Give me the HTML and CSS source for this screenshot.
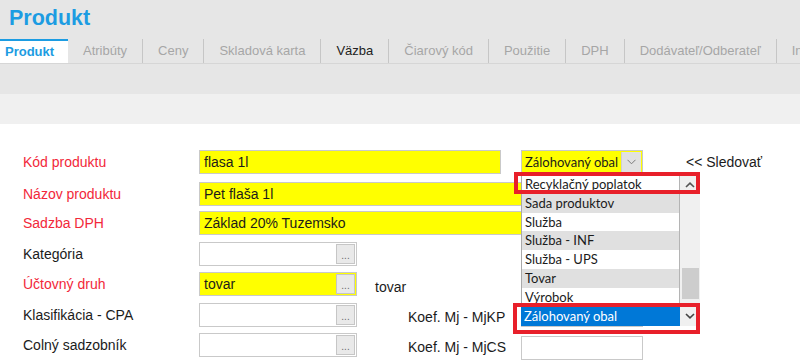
FILE: index.html
```html
<!DOCTYPE html>
<html lang="sk">
<head>
  <meta charset="UTF-8">
  <title>Produkt</title>
  <link rel="stylesheet" href="styles.css">
</head>
<body>
  <header class="topbar">
    <h1 class="title">Produkt</h1>
    <nav class="tabs">
      <span class="tab active">Produkt</span>
      <span class="tab">Atribúty</span>
      <span class="tab">Ceny</span>
      <span class="tab">Skladová karta</span>
      <span class="tab enabled">Väzba</span>
      <span class="tab">Čiarový kód</span>
      <span class="tab">Použitie</span>
      <span class="tab">DPH</span>
      <span class="tab">Dodávateľ/Odberateľ</span>
      <span class="tab">Inventúra</span>
    </nav>
  </header>
  <div class="band"></div>

  <main class="form">
    <!-- row 1 -->
    <label class="label required">Kód produktu</label>
    <div class="field required field-code">flasa 1l</div>
    <div class="select required">
      <span class="select-text">Zálohovaný obal</span>
      <span class="select-btn">
        <svg width="9" height="6" viewBox="0 0 9 6"><polyline points="0.5,0.8 4.5,4.8 8.5,0.8" fill="none" stroke="#7a7a7a" stroke-width="1"/></svg>
      </span>
    </div>
    <span class="follow">&lt;&lt; Sledovať</span>

    <!-- row 2 -->
    <label class="label required">Názov produktu</label>
    <div class="field required field-long">Pet flaša 1l</div>

    <!-- row 3 -->
    <label class="label required">Sadzba DPH</label>
    <div class="field required field-long">Základ 20% Tuzemsko</div>

    <!-- row 4 -->
    <label class="label">Kategória</label>
    <div class="field picker"><span></span><span class="picker-btn">...</span></div>

    <!-- row 5 -->
    <label class="label required">Účtovný druh</label>
    <div class="field required picker"><span>tovar</span><span class="picker-btn">...</span></div>
    <span class="note">tovar</span>

    <!-- row 6 -->
    <label class="label">Klasifikácia - CPA</label>
    <div class="field picker"><span></span><span class="picker-btn">...</span></div>
    <span class="koef">Koef. Mj - MjKP</span>
    <div class="field field-small"></div>

    <!-- row 7 -->
    <label class="label">Colný sadzobník</label>
    <div class="field picker"><span></span><span class="picker-btn">...</span></div>
    <span class="koef">Koef. Mj - MjCS</span>
    <div class="field field-small field-low"></div>
  </main>

  <!-- open combobox list -->
  <div class="popup">
    <ul class="options">
      <li>Recyklačný poplatok</li>
      <li class="alt">Sada produktov</li>
      <li>Služba</li>
      <li class="alt">Služba - INF</li>
      <li>Služba - UPS</li>
      <li class="alt">Tovar</li>
      <li>Výrobok</li>
    </ul>
    <div class="scrollbar">
      <span class="scroll-up">
        <svg width="10" height="6" viewBox="0 0 10 6"><polyline points="1,5 5,1.2 9,5" fill="none" stroke="#555" stroke-width="1.6"/></svg>
      </span>
      <span class="thumb"></span>
    </div>
    <div class="current">
      <span class="current-text">Zálohovaný obal</span>
      <span class="current-btn">
        <svg width="10" height="6" viewBox="0 0 10 6"><polyline points="1,1 5,4.8 9,1" fill="none" stroke="#444" stroke-width="1.6"/></svg>
      </span>
    </div>
  </div>

  <div class="mark mark-top"></div>
  <div class="mark mark-bottom"></div>
</body>
</html>
```

FILE: styles.css
```css
body {
  margin: 0;
  width: 800px;
  height: 364px;
  overflow: hidden;
  position: relative;
  background-color: #ffffff;
  color: #1b1b1b;
  font-family: "Liberation Sans", Arial, sans-serif;
  font-size: 14px;
}

/* header with title and tabs */
.topbar {
  background-color: #e6e6e6;
  height: 94px;
}

.title {
  margin: 0;
  padding: 6px 0 0 9px;
  font-size: 21.5px;
  line-height: 24px;
  font-weight: bold;
  color: #1c9ce2;
}

.tabs {
  display: flex;
  margin-top: 9px;
  height: 24px;
  border-bottom: 1px solid #d6d6d6;
  white-space: nowrap;
  overflow: hidden;
}

.tab {
  flex-shrink: 0;
  padding: 0 15px;
  line-height: 24px;
  font-size: 13px;
  color: #a6a6a6;
  border-right: 1px solid #c6c6c6;
}

.tab.active {
  width: 63px;
  padding: 0 0 0 5px;
  line-height: 22px;
  background-color: #ffffff;
  border-top: 2px solid #1c9ce2;
  border-right: none;
  color: #1c9ce2;
  font-weight: bold;
}

.tab.enabled {
  color: #222222;
}

.band {
  height: 30px;
  background-color: #f0f0f0;
}

/* form grid */
.form {
  display: grid;
  grid-template-columns: 176px 158px 164px 122px 43px 1fr;
  grid-template-rows: 32px 29px 31px 30px 31px 30px 30px;
  padding: 26px 0 0 23px;
}

.label {
  grid-column: 1;
  line-height: 24px;
}

.label.required {
  color: #f2283a;
}

.field {
  height: 24px;
  box-sizing: border-box;
  border: 1px solid #c9c9c9;
  background-color: #ffffff;
  padding: 0 4px;
  line-height: 22px;
}

.field.required {
  background-color: #ffff00;
}

.field-code {
  grid-column: 2 / 4;
  width: 302px;
}

.field-long {
  grid-column: 2 / 5;
}

.field-small {
  grid-column: 4;
}

.field-low {
  margin-top: 3px;
}

.picker {
  grid-column: 2;
  display: flex;
  justify-content: space-between;
  align-items: center;
  padding-right: 1px;
}

.picker-btn {
  width: 19px;
  height: 20px;
  box-sizing: border-box;
  border: 1px solid #c6c6c6;
  background-color: #e9e9e9;
  color: #6a6a6a;
  font-size: 10px;
  line-height: 22px;
  text-align: center;
}

.select {
  grid-column: 4;
  display: flex;
  height: 24px;
  box-sizing: border-box;
  border: 1px solid #c9c9c9;
  font-family: Lato, "Noto Sans", sans-serif;
  font-size: 13px;
}

.select.required {
  background-color: #ffff00;
}

.select-text {
  flex: 1;
  padding-left: 3px;
  line-height: 22px;
  white-space: nowrap;
  overflow: hidden;
}

.select-btn {
  width: 19px;
  margin: 1px;
  background-color: #e1e1e1;
  border-left: 1px solid #cfcfcf;
  display: flex;
  align-items: center;
  justify-content: center;
}

.follow {
  grid-column: 6;
  line-height: 24px;
}

.note {
  grid-column: 3;
  padding-left: 18px;
  line-height: 30px;
}

.koef {
  grid-column: 3;
  padding-left: 51px;
  line-height: 28px;
}

/* dropdown list of the open combobox */
.popup {
  position: absolute;
  left: 521px;
  top: 175px;
  width: 179px;
  display: grid;
  grid-template-columns: 159px 20px;
  background-color: #f0f0f0;
  font-family: Lato, "Noto Sans", sans-serif;
  font-size: 13px;
}

.options {
  margin: 0;
  padding: 0;
  list-style: none;
  background-color: #ffffff;
  border-left: 1px solid #a9a9a9;
  border-right: 1px solid #b4b4b4;
}

.options li {
  height: 18.75px;
  line-height: 18.75px;
  padding-left: 3px;
  white-space: nowrap;
}

.options li.alt {
  background-color: #e0e0e0;
}

.scrollbar {
  display: flex;
  flex-direction: column;
  align-items: center;
}

.scroll-up {
  height: 19px;
  display: flex;
  align-items: center;
}

.thumb {
  width: 17px;
  height: 31px;
  margin-top: auto;
  margin-bottom: 7px;
  background-color: #cdcdcd;
}

.current {
  grid-column: 1 / 3;
  display: flex;
  height: 20px;
}

.current-text {
  width: 159px;
  box-sizing: border-box;
  padding-left: 3px;
  line-height: 20px;
  background-color: #0078d7;
  color: #ffffff;
}

.current-btn {
  width: 17px;
  margin-left: 1px;
  display: flex;
  align-items: center;
  justify-content: center;
}

/* red highlight frames */
.mark {
  position: absolute;
  box-sizing: border-box;
  border: 4px solid #e8202a;
}

.mark-top {
  left: 514px;
  top: 172px;
  width: 186px;
  height: 22px;
}

.mark-bottom {
  left: 513px;
  top: 303px;
  width: 187px;
  height: 31px;
}
```
